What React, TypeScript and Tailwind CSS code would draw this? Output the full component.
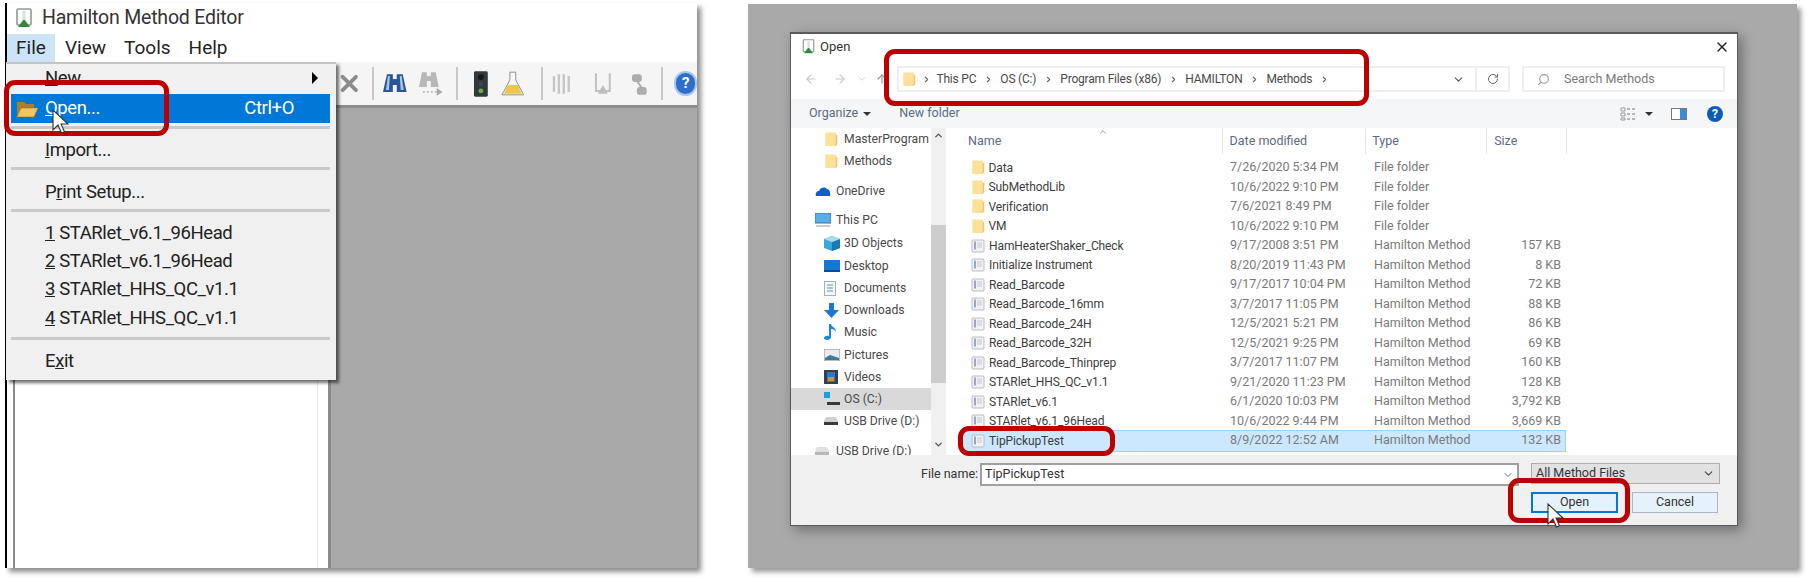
import React from 'react';
import { ArrowLeft, ArrowRight, ArrowUp, ChevronDown, ChevronRight, ChevronUp, Search, RotateCw, X } from 'lucide-react';

const FONT = "font-['Roboto','Noto_Sans',sans-serif]";

const FolderIcon = ({ size = 15 }: { size?: number }) => (
    <svg width={size * 0.9} height={size} viewBox="0 0 13 15" className="shrink-0">
        <path d="M1 1.500C1 1 1.400 .5 2 .5h9c.6 0 1 .5 1 1V14H2c-.6 0-1-.4-1-1z" fill="#fbe19a" />
        <path d="M10 14l3-1.500V3h-1.500v9z" fill="#eec56c" />
    </svg>
);

const OpenFolderIcon = () => (
    <svg width="22" height="16" viewBox="0 0 22 16">
        <path d="M1 1h7l2 2h8v4H6L1 15z" fill="#a97e2c" />
        <path d="M1 16l4-9h17l-4 9z" fill="#f1c464" stroke="#a27a28" strokeWidth="0.6" />
    </svg>
);

const MethodIcon = () => (
    <svg width="14" height="14" viewBox="0 0 14 14" className="shrink-0">
        <rect x="1" y="1" width="12" height="12" rx="1" fill="#f2f2f4" stroke="#b9bcc4" />
        <rect x="3" y="2.500" width="2" height="8" fill="#97a6cc" />
        <path d="M6 4h5M6 6h5M6 8h5" stroke="#c5c8d0" />
    </svg>
);

const AppIcon = ({ size = 20 }: { size?: number }) => (
    <svg width={size} height={size} viewBox="0 0 20 20" className="shrink-0">
        <rect x="3" y="1" width="14" height="16" rx="1" fill="#fff" stroke="#8f9c8f" strokeWidth="1.600" />
        <path d="M10 11l6 8H4z" fill="#2e8b3d" />
        <rect x="8.500" y="3" width="3" height="9" fill="#cfe6cf" />
    </svg>
);

const Cursor = ({ className }: { className: string }) => (
    <svg width="18" height="26" viewBox="0 0 18 26" className={className}>
        <path d="M1 1v20l5-5 3.500 8 3-1.300L9 15h7z" fill="#fff" stroke="#333" strokeWidth="1.100" />
    </svg>
);

const RedBox = ({ className }: { className: string }) => (
    <div className={`absolute border-[5px] border-[#bc0000] rounded-[11px] ${className}`} />
);

const Sep = () => <div className="w-[2px] h-[33px] bg-[#c8c8c8] shrink-0" />;

const Toolbar = () => (
    <div className="h-[46px] bg-[#f5f5f5] border-b-[3px] border-[#8e8e8e] flex items-center pl-[329px]">
        <X size={27} strokeWidth={3.4} className="text-[#8c8c8c]" />
        <div className="ml-[9px]"><Sep /></div>
        <svg width="26" height="24" viewBox="0 0 26 24" className="ml-[8px]">
            <path d="M5 2h6v18H1zM15 2h6l4 18H15z" fill="#2a5596" />
            <rect x="10" y="7" width="6" height="6" fill="#2a5596" />
            <path d="M6 4h2l-1 14H4zM18 4h2l2 14h-3z" fill="#a9c5e9" />
        </svg>
        <svg width="26" height="26" viewBox="0 0 26 26" className="ml-[11px]">
            <path d="M4 1h5v15H1zM13 1h5l3 15h-8z" fill="#b8b8b8" />
            <rect x="8" y="5" width="6" height="5" fill="#b8b8b8" />
            <path d="M5 21h15" stroke="#a8a8a8" strokeWidth="1.400" strokeDasharray="2 2" />
            <path d="M19 17l6 4-6 4z" fill="#a8a8a8" />
        </svg>
        <div className="ml-[12px]"><Sep /></div>
        <svg width="16" height="28" viewBox="0 0 16 28" className="ml-[15px]">
            <rect x="1" y="1" width="14" height="26" rx="1.500" fill="#33383a" />
            <circle cx="8" cy="7" r="3" fill="#16181a" />
            <circle cx="8" cy="14" r="2.500" fill="#444" />
            <circle cx="8" cy="21" r="2.500" fill="#5fb04a" />
        </svg>
        <svg width="24" height="26" viewBox="0 0 24 26" className="ml-[12px]">
            <path d="M9 1h6v8l8 15H1L9 9z" fill="#f6f6f6" stroke="#8b8f95" />
            <path d="M7 14h10l4 9H3z" fill="#eec64a" />
        </svg>
        <div className="ml-[17px]"><Sep /></div>
        <svg width="24" height="26" viewBox="0 0 24 26" className="ml-[8px]">
            <path d="M3 5v16M8 3v20M13 3v20M18 5v16" stroke="#c6c6c6" strokeWidth="2.400" />
        </svg>
        <svg width="20" height="26" viewBox="0 0 20 26" className="ml-[18px]">
            <path d="M3 2v18h14V2" fill="none" stroke="#c0c0c0" strokeWidth="2" />
            <path d="M10 14l5 9H5z" fill="#bdbdbd" />
        </svg>
        <svg width="18" height="26" viewBox="0 0 18 26" className="ml-[17px]">
            <rect x="2" y="3" width="10" height="8" rx="3" fill="#adadad" />
            <rect x="7" y="16" width="10" height="8" rx="3" fill="#adadad" />
            <path d="M7 10l5 7" stroke="#adadad" strokeWidth="2" />
        </svg>
        <div className="ml-[14px]"><Sep /></div>
        <div className="ml-[11px] w-[23px] h-[25px] rounded-full bg-[#2f6fc9] border-2 border-[#a9c8ef] text-white text-[15px] font-bold flex items-center justify-center">?</div>
    </div>
);

const MenuRow = ({ label, mnemonic, shortcut, active, arrow, tall }: { label: string; mnemonic: number; shortcut?: string; active?: boolean; arrow?: boolean; tall?: boolean }) => (
    <div className={`${tall ? 'h-[29px]' : 'h-[28px]'} pl-[34px] pr-[32px] flex items-center justify-between text-[18.5px] tracking-[-0.4px] leading-none ${active ? 'bg-[#0078d7] text-white' : 'text-[#222]'}`}>
        <span>
            {label.slice(0, mnemonic)}
            <span className="underline">{label[mnemonic]}</span>
            {label.slice(mnemonic + 1)}
        </span>
        {shortcut && <span className="mr-[4px]">{shortcut}</span>}
        {arrow && <span className="w-0 h-0 border-y-[6px] border-y-transparent border-l-[6px] border-l-black -mr-[20px]" />}
    </div>
);

const MenuSep = () => <div className="h-[3px] bg-[#c9c9c9]" />;

const FileMenu = () => (
    <div className="absolute -left-[1px] top-[59px] w-[330px] h-[318px] bg-[#f0f0f0] border-t-2 border-[#c4c4c4] pl-[5px] pr-[6px] shadow-[3px_3px_3px_rgba(0,0,0,0.55)]">
        <MenuRow label="New" mnemonic={0} arrow />
        <div className="mt-[2px] relative">
            <MenuRow label="Open..." mnemonic={0} shortcut="Ctrl+O" active tall />
            <div className="absolute left-[5px] top-[7px]"><OpenFolderIcon /></div>
        </div>
        <div className="mt-[3px]"><MenuSep /></div>
        <div className="mt-[7px]"><MenuRow label="Import..." mnemonic={0} /></div>
        <div className="mt-[3px]"><MenuSep /></div>
        <div className="mt-[8px]"><MenuRow label="Print Setup..." mnemonic={1} /></div>
        <div className="mt-[3px]"><MenuSep /></div>
        <div className="mt-[7px]"><MenuRow label="1 STARlet_v6.1_96Head" mnemonic={0} /></div>
        <MenuRow label="2 STARlet_v6.1_96Head" mnemonic={0} />
        <MenuRow label="3 STARlet_HHS_QC_v1.1" mnemonic={0} />
        <div className="mt-[1px]"><MenuRow label="4 STARlet_HHS_QC_v1.1" mnemonic={0} /></div>
        <div className="mt-[5px]"><MenuSep /></div>
        <div className="mt-[7px]"><MenuRow label="Exit" mnemonic={1} /></div>
    </div>
);

const EditorWindow = () => (
    <div className={`relative w-[692px] h-[565px] mt-[3px] ml-[5px] bg-white border-l-2 border-black shadow-[4px_4px_5px_rgba(0,0,0,0.45)] flex flex-col ${FONT}`}>
        <div className="h-[30px] flex items-center gap-[8px] pl-[7px] text-[19.5px] tracking-[-0.2px] text-[#333]">
            <AppIcon />
            <span>Hamilton Method Editor</span>
        </div>
        <div className="h-[29px] pt-[1px] flex items-center text-[19px] text-[#222]">
            <div className="w-[48px] h-full bg-[#cce4f7] flex items-center justify-center">File</div>
            <div className="ml-[10px]">View</div>
            <div className="ml-[18px]">Tools</div>
            <div className="ml-[18px]">Help</div>
        </div>
        <Toolbar />
        <div className="flex-1 flex">
            <div className="w-[318px] ml-[6px] border-l-2 border-[#8a8a8a] border-r-[3px] border-r-[#8a8a8a] bg-white">
                <div className="h-full w-[303px] border-r border-[#e8e8e8]" />
            </div>
            <div className="flex-1 bg-[#a9a9a9]" />
        </div>
        <FileMenu />
    </div>
);

const NAV_ITEMS: { label: string; y: number; icon: React.ReactNode; outer?: boolean; active?: boolean }[] = [
    { label: 'MasterProgram', y: 22, icon: <FolderIcon /> },
    { label: 'Methods', y: 22, icon: <FolderIcon /> },
    { label: 'OneDrive', y: 30, outer: true, icon: <svg width="16" height="12" viewBox="0 0 16 12"><path d="M1 11c-1-3 1-5 3-5 1-3 5-5 8-2 2 0 4 3 3 7z" fill="#0a62c8" /></svg> },
    { label: 'This PC', y: 29, outer: true, icon: <svg width="16" height="15" viewBox="0 0 16 15"><rect x="0" y="0" width="16" height="10" fill="#5aaee8" stroke="#3a6ea8" /><rect x="1" y="12" width="14" height="2" fill="#c8ccd2" /></svg> },
    { label: '3D Objects', y: 23, icon: <svg width="16" height="15" viewBox="0 0 16 15"><path d="M8 0l8 3v9l-8 3-8-3V3z" fill="#38a8d8" /><path d="M8 6v9l8-3V3z" fill="#1c78b0" /><path d="M0 3l8 3 8-3-8-3z" fill="#a8dcf0" /></svg> },
    { label: 'Desktop', y: 23, icon: <svg width="16" height="12" viewBox="0 0 16 12"><rect width="16" height="10" fill="#1278d8" /><rect y="10" width="16" height="2" fill="#0a4c90" /></svg> },
    { label: 'Documents', y: 22, icon: <svg width="12" height="15" viewBox="0 0 12 15"><rect x="0.500" y="0.500" width="11" height="14" fill="#f4f6f8" stroke="#a8b0b8" /><path d="M3 4h6M3 7h6M3 10h6" stroke="#5a9ad0" /></svg> },
    { label: 'Downloads', y: 22, icon: <svg width="15" height="15" viewBox="0 0 15 15"><path d="M5 0h5v7h5l-7.500 8L0 7h5z" fill="#1a78d4" /></svg> },
    { label: 'Music', y: 22, icon: <svg width="13" height="16" viewBox="0 0 13 16"><path d="M5 0h2c0 3 5 3 5 8-1-2-3-3-5-3v8c0 2-2 3-4 3s-3-1-3-2 2-3 5-2z" fill="#1a8ad8" /></svg> },
    { label: 'Pictures', y: 23, icon: <svg width="16" height="12" viewBox="0 0 16 12"><rect width="16" height="12" fill="#e8ecf0" stroke="#8a9098" /><path d="M1 9l5-3 9 3v2H1z" fill="#3a7a9a" /></svg> },
    { label: 'Videos', y: 22, icon: <svg width="14" height="14" viewBox="0 0 14 14"><rect width="14" height="14" fill="#3a4048" /><rect x="3" y="2" width="8" height="10" fill="#2a78c8" /><rect x="4" y="7" width="6" height="4" fill="#d8902a" /></svg> },
    { label: 'OS (C:)', y: 22, active: true, icon: <svg width="16" height="14" viewBox="0 0 16 14"><rect x="0" y="0" width="6" height="6" fill="#18a0e0" /><rect x="3" y="10" width="13" height="3" fill="#3a3a3a" /></svg> },
    { label: 'USB Drive (D:)', y: 22, icon: <svg width="14" height="8" viewBox="0 0 14 8"><path d="M2 0h10l2 4v4H0V4z" fill="#d0d0d0" /><rect y="5" width="14" height="3" fill="#3a3a3a" /></svg> },
    { label: 'USB Drive (D:)', y: 30, outer: true, icon: <svg width="14" height="8" viewBox="0 0 14 8"><path d="M2 0h10l2 4v4H0V4z" fill="#e0e0e0" /><rect y="5" width="14" height="3" fill="#b8b8b8" /></svg> },
];

const NavPane = () => (
    <div className="w-[156px] shrink-0 relative overflow-hidden flex text-[12.2px] text-[#4a4a4a]">
        <div className="w-[140px] shrink-0">
            {NAV_ITEMS.map((n, i) => (
                <div key={i} style={{ marginTop: i === 0 ? 0 : n.y - 22 }} className={`h-[22px] flex items-center ${n.active ? 'bg-[#d9d9d9]' : ''}`}>
                    <div className={`${n.outer ? 'w-[45px] pl-[24px]' : 'w-[53px] pl-[33px]'} shrink-0 flex`}>{n.icon}</div>
                    <span className="whitespace-nowrap">{n.label}</span>
                </div>
            ))}
        </div>
        <div className="w-[15px] bg-[#f0f0f0] flex flex-col items-center text-[#555]">
            <ChevronUp size={11} strokeWidth={3} className="mt-[2px] shrink-0" />
            <div className="w-full h-[158px] mt-[84px] bg-[#cdcdcd] shrink-0" />
            <div className="flex-1" />
            <ChevronDown size={11} strokeWidth={3} className="mb-[5px] shrink-0" />
        </div>
    </div>
);

const FILE_ROWS = [
    ['Data', '7/26/2020 5:34 PM', 'File folder', ''],
    ['SubMethodLib', '10/6/2022 9:10 PM', 'File folder', ''],
    ['Verification', '7/6/2021 8:49 PM', 'File folder', ''],
    ['VM', '10/6/2022 9:10 PM', 'File folder', ''],
    ['HamHeaterShaker_Check', '9/17/2008 3:51 PM', 'Hamilton Method', '157 KB'],
    ['Initialize Instrument', '8/20/2019 11:43 PM', 'Hamilton Method', '8 KB'],
    ['Read_Barcode', '9/17/2017 10:04 PM', 'Hamilton Method', '72 KB'],
    ['Read_Barcode_16mm', '3/7/2017 11:05 PM', 'Hamilton Method', '88 KB'],
    ['Read_Barcode_24H', '12/5/2021 5:21 PM', 'Hamilton Method', '86 KB'],
    ['Read_Barcode_32H', '12/5/2021 9:25 PM', 'Hamilton Method', '69 KB'],
    ['Read_Barcode_Thinprep', '3/7/2017 11:07 PM', 'Hamilton Method', '160 KB'],
    ['STARlet_HHS_QC_v1.1', '9/21/2020 11:23 PM', 'Hamilton Method', '128 KB'],
    ['STARlet_v6.1', '6/1/2020 10:03 PM', 'Hamilton Method', '3,792 KB'],
    ['STARlet_v6.1_96Head', '10/6/2022 9:44 PM', 'Hamilton Method', '3,669 KB'],
    ['TipPickupTest', '8/9/2022 12:52 AM', 'Hamilton Method', '132 KB'],
];

const FileList = () => (
    <div className="flex-1 pl-[14px] text-[12.5px]">
        <div className="relative h-[26px] flex items-center text-[#5b6b85] w-[606px]">
            <div className="w-[262px] pl-[7px] h-full flex items-center border-r border-[#e5e5e5]">Name</div>
            <div className="w-[144px] pl-[7px] h-full flex items-center border-r border-[#e5e5e5]">Date modified</div>
            <div className="w-[121px] pl-[6px] h-full flex items-center border-r border-[#e5e5e5]">Type</div>
            <div className="w-[80px] pl-[7px] h-full flex items-center border-r border-[#e5e5e5]">Size</div>
            <ChevronUp size={10} className="absolute left-[137px] -top-[1px] text-[#888]" />
        </div>
        <div className="mt-[3px] pt-[1px]">
            {FILE_ROWS.map((r, i) => {
                const isSelected = r[0] === 'TipPickupTest';
                return (
                    <div key={r[0]} className={`h-[19.5px] flex items-center w-[604px] ${isSelected ? 'bg-[#cce8ff] outline outline-[#99d1ff]' : ''} text-[#7a7a7a]`}>
                        <div className="w-[263px] pl-[10px] flex items-center gap-[4px] text-[12px] tracking-[-0.1px] text-[#3d3d3d] whitespace-nowrap">
                            {i < 4 ? <FolderIcon /> : <MethodIcon />}
                            <span>{r[0]}</span>
                        </div>
                        <div className="w-[144px] pl-[6px] whitespace-nowrap">{r[1]}</div>
                        <div className="w-[121px] pl-[6px] whitespace-nowrap">{r[2]}</div>
                        <div className="w-[72px] text-right whitespace-nowrap">{r[3]}</div>
                    </div>
                );
            })}
        </div>
    </div>
);

const OpenDialog = () => (
    <div className={`w-[948px] h-[494px] bg-white border border-[#5a5a5a] border-t-2 shadow-[4px_4px_12px_rgba(0,0,0,0.35)] flex flex-col ${FONT}`}>
        <div className="h-[32px] pb-[7px] flex items-center pl-[10px] pr-[7px] gap-[4px] text-[13px] text-[#333] shrink-0">
            <AppIcon size={15} />
            <span>Open</span>
            <X size={16} className="ml-auto text-[#222]" />
        </div>
        <div className="h-[26px] flex items-center text-[12px] text-[#4a4a4a] shrink-0">
            <ArrowLeft size={14} className="ml-[13px] text-[#c8c8c8]" />
            <ArrowRight size={14} className="ml-[15px] text-[#c8c8c8]" />
            <ChevronDown size={10} className="ml-[10px] text-[#c8c8c8]" />
            <ArrowUp size={14} className="ml-[8px] text-[#999]" />
            <div className="ml-[8px] w-[613px] h-full border-2 border-[#eeeeee] flex items-center">
                <div className="ml-[3px] flex items-center flex-1 tracking-[-0.2px]">
                    <FolderIcon />
                    {['This PC', 'OS (C:)', 'Program Files (x86)', 'HAMILTON', 'Methods'].map((p, i) => (
                        <React.Fragment key={p}>
                            <div className={`${i === 0 ? 'w-[21px]' : 'w-[24px]'} flex justify-center`}>
                                <ChevronRight size={9} strokeWidth={3} className="text-[#666]" />
                            </div>
                            <span className="whitespace-nowrap">{p}</span>
                        </React.Fragment>
                    ))}
                    <div className="w-[24px] flex justify-center">
                        <ChevronRight size={9} strokeWidth={3} className="text-[#666]" />
                    </div>
                </div>
                <ChevronDown size={13} className="text-[#555] mr-[10px]" />
                <div className="w-[33px] h-full border-l-2 border-[#eeeeee] flex items-center justify-center">
                    <RotateCw size={12} className="text-[#666]" />
                </div>
            </div>
            <div className="ml-[12px] w-[203px] h-full border-2 border-[#eeeeee] flex items-center pl-[13px] gap-[14px] text-[12.5px] text-[#7a7a7a]">
                <Search size={13} className="-scale-x-100 text-[#999]" />
                <span>Search Methods</span>
            </div>
        </div>
        <div className="mt-[7px] h-[29px] bg-[#f5f6f7] flex items-center pl-[18px] pr-[14px] text-[12.5px] text-[#5b6b85] shrink-0">
            <span>Organize</span>
            <span className="ml-[5px] w-0 h-0 border-x-[4px] border-x-transparent border-t-[4px] border-t-[#333]" />
            <span className="ml-[28px]">New folder</span>
            <div className="ml-auto flex items-center">
                <svg width="16" height="14" viewBox="0 0 16 14"><path d="M1 1h4v3H1zM1 6h4v3H1zM1 11h4v2H1z" fill="none" stroke="#999" /><path d="M7 2h3M12 2h3M7 7h3M12 7h3M7 12h3M12 12h3" stroke="#777" /></svg>
                <span className="ml-[9px] w-0 h-0 border-x-[4px] border-x-transparent border-t-[4px] border-t-[#333]" />
                <svg width="16" height="12" viewBox="0 0 16 12" className="ml-[18px]"><rect x="0.500" y="0.500" width="15" height="11" fill="#fff" stroke="#777" /><rect x="9" y="1" width="6" height="10" fill="#3a8ad8" /></svg>
                <div className="ml-[20px] w-[16px] h-[16px] rounded-full bg-[#0a5cb8] text-white text-[12px] font-bold flex items-center justify-center">?</div>
            </div>
        </div>
        <div className="h-[327px] flex overflow-hidden shrink-0">
            <NavPane />
            <FileList />
        </div>
        <div className="flex-1 bg-[#f0f0f0] relative text-[12.5px] text-[#333]">
            <div className="flex items-start pl-[130px] pt-[8px]">
                <span className="mt-[2px] w-[59px] whitespace-nowrap">File name:</span>
                <div className="w-[539px] h-[23px] bg-white border-2 border-[#a0a0a0] flex items-center justify-between pl-[3px] pr-[3px]">
                    <span>TipPickupTest</span>
                    <ChevronDown size={12} className="text-[#666]" />
                </div>
                <div className="ml-[12px] w-[189px] h-[21px] bg-[#e1e1e1] border border-[#adadad] flex items-center justify-between pl-[4px] pr-[4px]">
                    <span>All Method Files</span>
                    <ChevronDown size={13} className="text-[#444]" />
                </div>
            </div>
            <div className="flex justify-end gap-[14px] pr-[19px] mt-[6px]">
                <div className="w-[87px] h-[21px] bg-[#e5f1fb] border-2 border-[#0078d7] flex items-center justify-center">Open</div>
                <div className="w-[86px] h-[21px] bg-[#e5f1fb] border border-[#a8b8c8] flex items-center justify-center">Cancel</div>
            </div>
        </div>
    </div>
);

export default function App() {
    return (
        <div className="relative w-[1810px] h-[581px] bg-white overflow-hidden flex items-start">
            <EditorWindow />
            <div className="ml-[51px] mt-[4px] w-[1049px] h-[564px] bg-[#a9a9a9] shadow-[4px_4px_5px_rgba(0,0,0,0.4)] pl-[42px] pt-[28px]">
                <OpenDialog />
            </div>
            <RedBox className="left-[4px] top-[80px] w-[165px] h-[56px]" />
            <Cursor className="absolute left-[52px] top-[109px]" />
            <RedBox className="left-[884px] top-[49px] w-[485px] h-[57px]" />
            <RedBox className="left-[958px] top-[426px] w-[157px] h-[30px]" />
            <RedBox className="left-[1508px] top-[478px] w-[122px] h-[45px]" />
            <Cursor className="absolute left-[1547px] top-[503px]" />
        </div>
    );
}
